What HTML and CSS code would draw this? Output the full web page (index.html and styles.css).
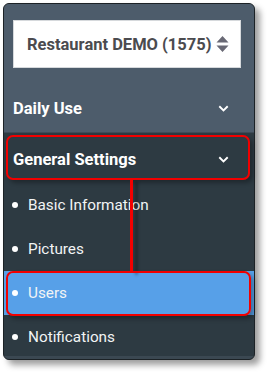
FILE: index.html
```html
<!DOCTYPE html>
<html>
<head>
<meta charset="utf-8">
<link rel="stylesheet" href="styles.css">
</head>
<body>
<div class="stage">
  <div class="panel">
    <div class="top">
      <div class="select">
        <span class="select-text">Restaurant DEMO (1575)</span>
        <svg class="updown" width="13" height="18" viewBox="0 0 13 18"><path d="M6.5 1 L12.5 7.5 H0.5 Z M6.5 17 L12.5 10.5 H0.5 Z" fill="#696975"/></svg>
      </div>
    </div>
    <div class="row section daily">
      <span>Daily Use</span>
      <svg class="chev" width="11" height="7" viewBox="0 0 11 7"><path d="M1.3 1.3 L5.5 5.4 L9.7 1.3" fill="none" stroke="#fff" stroke-width="1.9"/></svg>
    </div>
    <div class="row section general">
      <span>General Settings</span>
      <svg class="chev" width="11" height="7" viewBox="0 0 11 7"><path d="M1.3 1.3 L5.5 5.4 L9.7 1.3" fill="none" stroke="#fff" stroke-width="1.9"/></svg>
    </div>
    <div class="row sub"><span class="dot"></span>Basic Information</div>
    <div class="row sub"><span class="dot"></span>Pictures</div>
    <div class="row sub active"><span class="dot"></span>Users</div>
    <div class="row sub last"><span class="dot"></span>Notifications</div>
  </div>
  <div class="mark mark-general"></div>
  <div class="mark-line"></div>
  <div class="mark mark-users"></div>
</div>
</body>
</html>
```

FILE: styles.css
```css
html, body {
  margin: 0;
  padding: 0;
  background: #ffffff;
}
body {
  font-family: Roboto, "Liberation Sans", sans-serif;
}
.stage {
  position: relative;
  width: 268px;
  height: 372px;
}
.panel {
  position: absolute;
  left: 3px;
  top: 3px;
  width: 250px;
  border: 1px solid #1c2226;
  border-radius: 6px;
  overflow: hidden;
  background: #2d3a42;
  box-shadow: 5px 5px 6px rgba(0,0,0,0.38);
}
.top {
  background: #4d5c6b;
  padding: 16px 13px 18px 9px;
}
.select {
  height: 48px;
  background: #ffffff;
  display: flex;
  align-items: center;
  padding-left: 13px;
  gap: 4px;
  box-sizing: border-box;
  border: 1px solid #d6d9dc;
}
.select-text {
  font-size: 16.5px;
  font-weight: 700;
  color: #4b4b4f;
  white-space: nowrap;
}
.updown {
  display: block;
}
.row {
  display: flex;
  align-items: center;
  color: #ffffff;
  box-sizing: border-box;
}
.section {
  font-size: 16.5px;
  font-weight: 700;
  padding: 0 25px 0 9px;
  justify-content: space-between;
}
.daily {
  background: #4d5c6b;
  height: 47px;
  padding-bottom: 2px;
  border-bottom: 1px solid #3e4b57;
}
.general {
  background: #2d3a42;
  height: 50px;
  padding-top: 2px;
}
.chev {
  display: block;
}
.sub {
  font-size: 15.3px;
  height: 44px;
  padding-left: 8px;
  color: #f2f4f5;
}
.dot {
  width: 6px;
  height: 6px;
  border-radius: 50%;
  background: #ffffff;
  margin-right: 10px;
}
.active {
  background: #57a0e8;
}
.last {
  border-bottom: 3px solid #3b4852;
  padding-top: 2px;
}
.mark {
  position: absolute;
  border: 2.5px solid #f20000;
  border-radius: 7px;
  box-sizing: border-box;
  box-shadow: 3px 3px 4px rgba(0,0,0,0.3);
}
.mark-general {
  left: 6px;
  top: 135px;
  width: 244px;
  height: 45px;
}
.mark-users {
  left: 6px;
  top: 271px;
  width: 245px;
  height: 45px;
}
.mark-line {
  position: absolute;
  left: 130px;
  top: 179px;
  width: 2.5px;
  height: 93px;
  background: #f20000;
  box-shadow: 5px 3px 3px rgba(0,0,0,0.3);
}
```
